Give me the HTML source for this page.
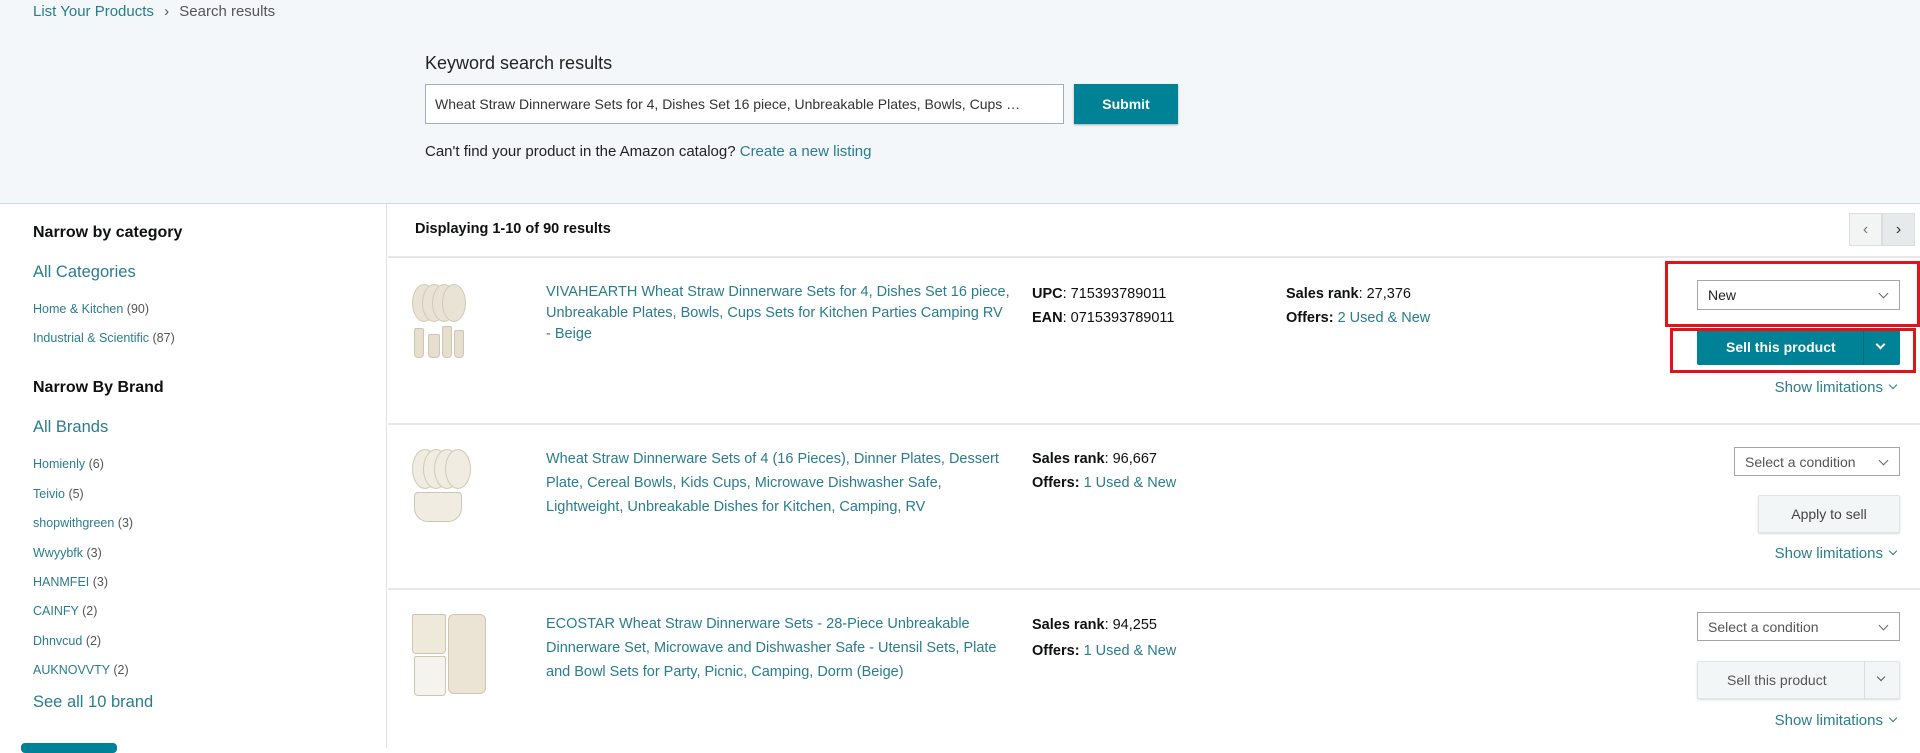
<!DOCTYPE html>
<html><head><meta charset="utf-8"><style>
*{box-sizing:border-box;margin:0;padding:0}
body{width:1920px;height:748px;overflow:hidden;background:#fff;font-family:"Liberation Sans",sans-serif;color:#0f1111;font-size:14px;position:relative}
.a{position:absolute;white-space:nowrap}
.l{color:#2a7d8c}
.hdr{position:absolute;left:0;top:0;width:1920px;height:204px;background:#f3f7f9;border-bottom:1px solid #d5dbdb}
.b{font-weight:bold}
.sel{position:absolute;border:1px solid #a6a6a6;background:#fff;height:30px;padding-left:10px;line-height:28px;font-size:14px;color:#555}
.sel:after{content:"";position:absolute;right:12px;top:9px;width:6px;height:6px;border-right:1.5px solid #666;border-bottom:1.5px solid #666;transform:rotate(45deg)}
.btn{position:absolute;border-radius:2px;text-align:center;font-size:14px}
.sl{position:absolute;color:#2a7d8c;font-size:15px;right:24px}
.sl:after{content:"";display:inline-block;width:5px;height:5px;border-right:1.5px solid #2a7d8c;border-bottom:1.5px solid #2a7d8c;transform:rotate(45deg);margin-left:7px;position:relative;top:-4px}
.hr{position:absolute;left:388px;width:1532px;height:2px;background:#e7e7e7}
.plate{position:absolute;border-radius:50%;background:#e9e3d6;border:1px solid #d2c9b6}
.cup{position:absolute;background:#e6dfd0;border:1px solid #cfc6b2;border-radius:2px 2px 4px 4px}
.side div{position:absolute;left:33px;white-space:nowrap;font-size:12.5px}
.t{font-size:14.5px;line-height:21px}
</style></head><body>
<div class="hdr"></div>
<div class="a" style="left:33px;top:3px;font-size:15px"><span class="l">List Your Products</span> <span style="color:#555;margin:0 6px">›</span> <span style="color:#555">Search results</span></div>
<div class="a" style="left:425px;top:53px;font-size:18px;color:#222">Keyword search results</div>
<div class="a" style="left:425px;top:84px;width:639px;height:40px;background:#fff;border:1px solid #aab;line-height:38px;padding-left:9px;font-size:14px;color:#333">Wheat Straw Dinnerware Sets for 4, Dishes Set 16 piece, Unbreakable Plates, Bowls, Cups …</div>
<div class="a" style="left:1074px;top:84px;width:104px;height:40px;background:#008296;color:#fff;font-weight:bold;text-align:center;line-height:40px;font-size:14px;box-shadow:0 1px 2px rgba(0,0,0,.3)">Submit</div>
<div class="a" style="left:425px;top:143px;font-size:15px;color:#222">Can't find your product in the Amazon catalog? <span class="l">Create a new listing</span></div>

<div style="position:absolute;left:386px;top:204px;width:1px;height:544px;background:#e3e3e3"></div>
<div class="side">
<div class="b" style="top:224px;font-size:16px">Narrow by category</div>
<div class="l" style="top:263px;font-size:16.5px">All Categories</div>
<div class="l" style="top:302px">Home &amp; Kitchen <span style="color:#555">(90)</span></div>
<div class="l" style="top:331px">Industrial &amp; Scientific <span style="color:#555">(87)</span></div>
<div class="b" style="top:379px;font-size:16px">Narrow By Brand</div>
<div class="l" style="top:418px;font-size:16.5px">All Brands</div>
<div class="l" style="top:457px">Homienly <span style="color:#555">(6)</span></div>
<div class="l" style="top:487px">Teivio <span style="color:#555">(5)</span></div>
<div class="l" style="top:516px">shopwithgreen <span style="color:#555">(3)</span></div>
<div class="l" style="top:546px">Wwyybfk <span style="color:#555">(3)</span></div>
<div class="l" style="top:575px">HANMFEI <span style="color:#555">(3)</span></div>
<div class="l" style="top:604px">CAINFY <span style="color:#555">(2)</span></div>
<div class="l" style="top:634px">Dhnvcud <span style="color:#555">(2)</span></div>
<div class="l" style="top:663px">AUKNOVVTY <span style="color:#555">(2)</span></div>
<div class="l" style="top:693px;font-size:16.5px">See all 10 brand</div>
</div>
<div class="a" style="left:21px;top:743px;width:96px;height:10px;background:#008296;border-radius:4px"></div>

<div class="a b" style="left:415px;top:221px;font-size:14.5px">Displaying 1-10 of 90 results</div>
<div class="a" style="left:1849px;top:213px;width:33px;height:33px;background:#f3f5f5;border:1px solid #ddd;text-align:center;line-height:31px;color:#777;font-size:16px">‹</div>
<div class="a" style="left:1882px;top:213px;width:33px;height:33px;background:#e6eaea;border:1px solid #ddd;text-align:center;line-height:31px;color:#333;font-size:16px">›</div>
<div class="hr" style="top:256px"></div>
<div class="hr" style="top:423px"></div>
<div class="hr" style="top:588px"></div>

<div class="plate" style="left:412px;top:284px;width:24px;height:38px"></div>
<div class="plate" style="left:422px;top:284px;width:24px;height:38px"></div>
<div class="plate" style="left:432px;top:284px;width:24px;height:38px"></div>
<div class="plate" style="left:442px;top:284px;width:24px;height:38px"></div>
<div class="cup" style="left:414px;top:328px;width:10px;height:30px"></div>
<div class="cup" style="left:428px;top:334px;width:12px;height:24px"></div>
<div class="cup" style="left:442px;top:326px;width:10px;height:32px"></div>
<div class="cup" style="left:454px;top:330px;width:10px;height:28px"></div>
<div class="a t" style="left:546px;top:282px"><span class="l">VIVAHEARTH Wheat Straw Dinnerware Sets for 4, Dishes Set 16 piece,<br>Unbreakable Plates, Bowls, Cups Sets for Kitchen Parties Camping RV<br>- Beige</span></div>
<div class="a" style="left:1032px;top:282px;line-height:24px;font-size:14.5px"><b>UPC</b>: 715393789011<br><b>EAN</b>: 0715393789011</div>
<div class="a" style="left:1286px;top:282px;line-height:24px;font-size:14.5px"><b>Sales rank</b>: 27,376<br><b>Offers:</b> <span class="l">2 Used &amp; New</span></div>
<div class="sel" style="left:1697px;top:280px;width:203px;color:#222">New</div>
<div class="btn" style="left:1697px;top:329px;width:203px;height:36px;background:#008296;color:#fff;font-weight:bold;line-height:36px;text-align:left;padding-left:29px">Sell this product</div>
<div class="a" style="left:1863px;top:329px;width:1px;height:36px;background:#006b7a"></div>
<div class="a" style="left:1877px;top:341px;width:7px;height:7px;border-right:2px solid #fff;border-bottom:2px solid #fff;transform:rotate(45deg)"></div>
<div class="a" style="left:1665px;top:261px;width:255px;height:66px;border:3px solid #e0131b"></div>
<div class="a" style="left:1670px;top:328px;width:246px;height:45px;border:3px solid #e0131b"></div>
<div class="sl" style="top:379px">Show limitations</div>

<div class="plate" style="left:412px;top:449px;width:26px;height:40px;background:#f0ece2"></div>
<div class="plate" style="left:423px;top:449px;width:26px;height:40px;background:#f0ece2"></div>
<div class="plate" style="left:434px;top:449px;width:26px;height:40px;background:#f0ece2"></div>
<div class="plate" style="left:445px;top:449px;width:26px;height:40px;background:#f0ece2"></div>
<div class="cup" style="left:414px;top:492px;width:48px;height:30px;background:#f0ece2;border-radius:4px 4px 14px 14px"></div>
<div class="a t" style="left:546px;top:447px;line-height:24px"><span class="l">Wheat Straw Dinnerware Sets of 4 (16 Pieces), Dinner Plates, Dessert<br>Plate, Cereal Bowls, Kids Cups, Microwave Dishwasher Safe,<br>Lightweight, Unbreakable Dishes for Kitchen, Camping, RV</span></div>
<div class="a" style="left:1032px;top:447px;line-height:24px;font-size:14.5px"><b>Sales rank</b>: 96,667<br><b>Offers:</b> <span class="l">1 Used &amp; New</span></div>
<div class="sel" style="left:1734px;top:447px;width:166px;height:29px">Select a condition</div>
<div class="btn" style="left:1758px;top:495px;width:142px;height:38px;background:#f3f6f6;border:1px solid #e0e4e4;line-height:36px;color:#444;box-shadow:0 1px 2px rgba(0,0,0,.15)">Apply to sell</div>
<div class="sl" style="top:545px">Show limitations</div>

<div class="cup" style="left:412px;top:614px;width:34px;height:40px;background:#efe9dc"></div>
<div class="cup" style="left:448px;top:614px;width:38px;height:80px;background:#ebe4d4;border-radius:6px"></div>
<div class="cup" style="left:414px;top:656px;width:32px;height:40px;background:#f5f3ee"></div>
<div class="a t" style="left:546px;top:612px;line-height:24px"><span class="l">ECOSTAR Wheat Straw Dinnerware Sets - 28-Piece Unbreakable<br>Dinnerware Set, Microwave and Dishwasher Safe - Utensil Sets, Plate<br>and Bowl Sets for Party, Picnic, Camping, Dorm (Beige)</span></div>
<div class="a" style="left:1032px;top:612px;line-height:26px;font-size:14.5px"><b>Sales rank</b>: 94,255<br><b>Offers:</b> <span class="l">1 Used &amp; New</span></div>
<div class="sel" style="left:1697px;top:612px;width:203px;height:29px">Select a condition</div>
<div class="btn" style="left:1697px;top:661px;width:203px;height:38px;background:#f3f6f6;border:1px solid #e0e4e4;line-height:36px;color:#555;text-align:left;padding-left:29px;box-shadow:0 1px 2px rgba(0,0,0,.15)">Sell this product</div>
<div class="a" style="left:1864px;top:661px;width:1px;height:38px;background:#d8dcdc"></div>
<div class="a" style="left:1878px;top:674px;width:6px;height:6px;border-right:1.5px solid #555;border-bottom:1.5px solid #555;transform:rotate(45deg)"></div>
<div class="sl" style="top:712px">Show limitations</div>
</body></html>
